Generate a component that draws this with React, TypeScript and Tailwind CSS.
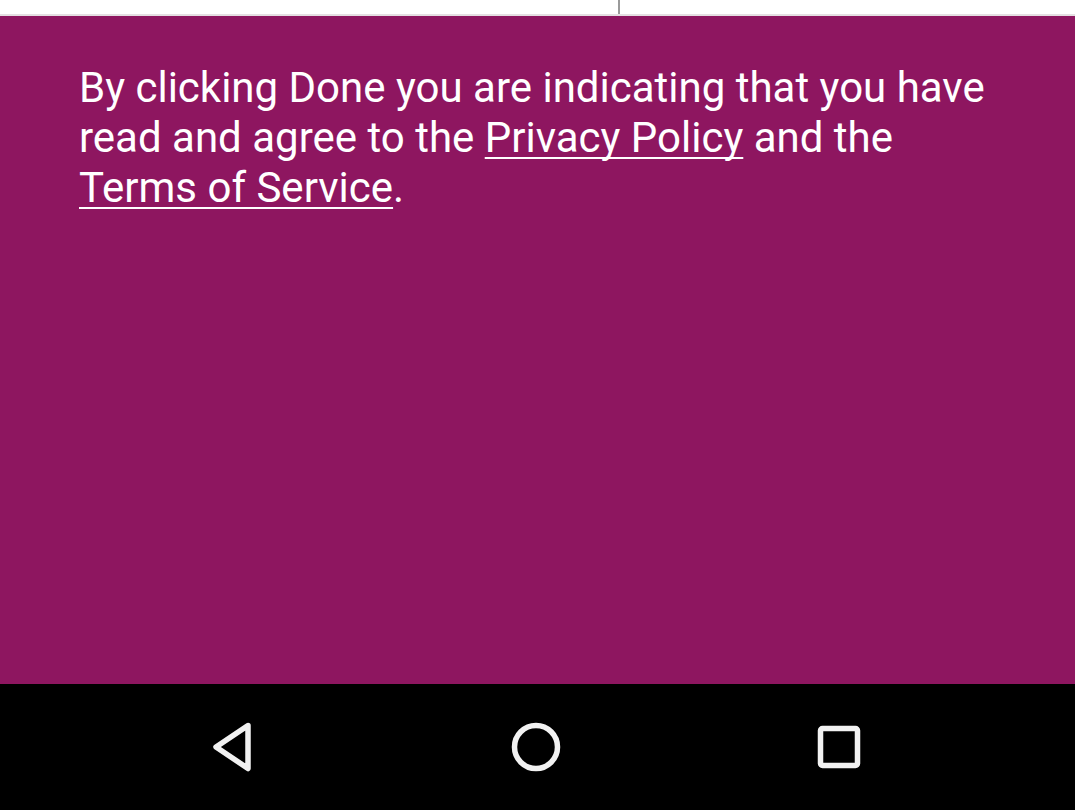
import React from 'react';

export default function App() {
  return (
    <div className="w-[1075px] h-[810px] flex flex-col overflow-hidden bg-[#8e1660]" style={{ fontFamily: 'Roboto, "Noto Sans", sans-serif' }}>
      {/* Top strip */}
      <div className="h-[16px] flex shrink-0 bg-white border-b-2 border-[#e4e0e2]">
        <div className="w-[618px]" />
        <div className="w-[2px] bg-[#9a9a9a]" />
        <div className="flex-1" />
      </div>

      {/* Consent text */}
      <div className="flex-1 pl-[79px] pr-[60px] pt-[47px]">
        <p className="text-[42px] leading-[50px] text-white">
          By clicking Done you are indicating that you have read and agree to the{' '}
          <span className="underline decoration-2 underline-offset-[5px] [text-decoration-skip-ink:none]">Privacy Policy</span> and the{' '}
          <span className="underline decoration-2 underline-offset-[5px] [text-decoration-skip-ink:none]">Terms of Service</span>.
        </p>
      </div>

      {/* Nav bar */}
      <div className="h-[126px] shrink-0 bg-black flex items-center justify-between pl-[208px] pr-[213px]">
        <svg width="48" height="52" viewBox="0 0 48 52" className="text-[#f2f2f2]">
          <path d="M40 4.5 L8 26 L40 47.5 Z" fill="none" stroke="currentColor" strokeWidth="5.5" strokeLinejoin="round" />
        </svg>
        <svg width="52" height="52" viewBox="0 0 52 52" className="text-[#f2f2f2]">
          <circle cx="26" cy="26" r="21.5" fill="none" stroke="currentColor" strokeWidth="5.5" />
        </svg>
        <svg width="46" height="46" viewBox="0 0 46 46" className="text-[#f2f2f2]">
          <rect x="4.5" y="4.5" width="37" height="37" rx="2" fill="none" stroke="currentColor" strokeWidth="5.5" />
        </svg>
      </div>
    </div>
  );
}
